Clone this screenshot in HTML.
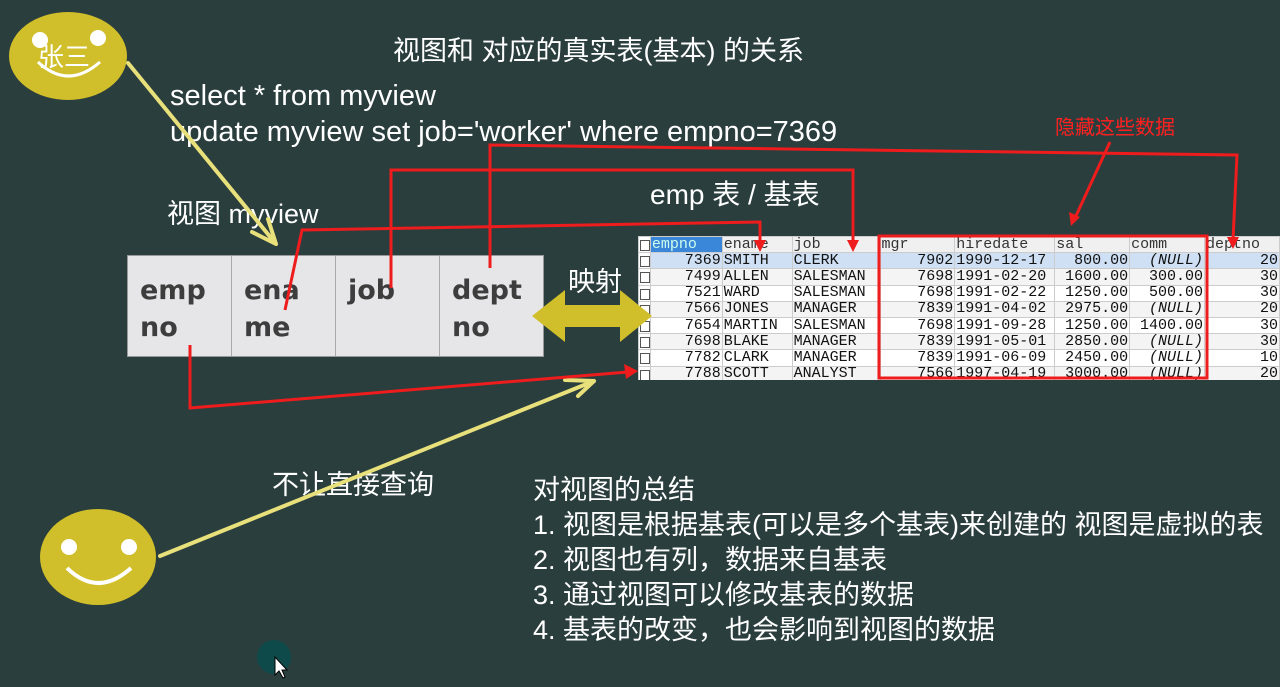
<!DOCTYPE html>
<html><head><meta charset="utf-8"><style>
*{margin:0;padding:0;box-sizing:border-box}
body{width:1280px;height:687px;background:#2b3e3e;position:relative;overflow:hidden;font-family:"Liberation Sans","Noto Sans CJK SC",sans-serif;color:#fff}
.t{position:absolute;white-space:nowrap;line-height:1}
.vb{position:absolute;left:127px;top:255px;width:417px;height:102px;background:#e6e6e8;border:1px solid #999;display:flex}
.vb div{flex:1;border-right:1px solid #aaa;font:bold 27px "DejaVu Sans","Liberation Sans",sans-serif;color:#3d3d3d;padding:16px 0 0 12px;line-height:37px}
.vb div:last-child{border-right:none}
table{position:absolute;left:638px;top:236px;border-collapse:collapse;font:15px "Liberation Mono","DejaVu Sans Mono",monospace;color:#111;background:#fff;table-layout:fixed}
td{height:16.2px;border:1px solid #ccc;padding:0 1px;overflow:hidden;white-space:nowrap;line-height:14px}
tr.h td{background:#f0f0f0;color:#333}
tr.s td{background:#cfe0f5}
tr:nth-child(odd):not(.h):not(.s) td{background:#f4f4f4}
.r{text-align:right}.i{font-style:italic}
td.cb{background:#fff!important;position:relative}
td.cb::after{content:"";position:absolute;left:1px;top:3px;width:8px;height:9px;border:1px solid #555}
</style></head><body>
<div class="t" style="left:393px;top:38px;font-size:27px">视图和 对应的真实表(基本) 的关系</div>
<div class="t" style="left:170px;top:82px;font-size:29px">select * from myview</div>
<div class="t" style="left:170px;top:118px;font-size:29px">update myview set job='worker' where empno=7369</div>
<div class="t" style="left:167px;top:201px;font-size:27px">视图 myview</div>
<div class="t" style="left:650px;top:181px;font-size:28px">emp 表 / 基表</div>
<div class="t" style="left:568px;top:269px;font-size:27px">映射</div>
<div class="t" style="left:272px;top:472px;font-size:27px">不让直接查询</div>
<div class="t" style="left:1055px;top:118px;font-size:20px;color:#ff2020">隐藏这些数据</div>
<div class="t" style="left:533px;top:473px;font-size:27px;line-height:35px">对视图的总结<br>1. 视图是根据基表(可以是多个基表)来创建的 视图是虚拟的表<br>2. 视图也有列，数据来自基表<br>3. 通过视图可以修改基表的数据<br>4. 基表的改变，也会影响到视图的数据</div>
<div class="vb"><div>emp<br>no</div><div>ena<br>me</div><div>job</div><div>dept<br>no</div></div>
<table>
<colgroup><col style="width:12px"><col style="width:72px"><col style="width:70px"><col style="width:88px"><col style="width:75px"><col style="width:100px"><col style="width:75px"><col style="width:75px"><col style="width:75px"></colgroup>
<tr class="h"><td class="cb"></td><td style="background:#3a86d8;color:#cfe">empno</td><td>ename</td><td>job</td><td>mgr</td><td>hiredate</td><td>sal</td><td>comm</td><td>deptno</td></tr>
<tr class="s"><td class="cb"></td><td class="r">7369</td><td>SMITH</td><td>CLERK</td><td class="r">7902</td><td>1990-12-17</td><td class="r">800.00</td><td class="r i">(NULL)</td><td class="r">20</td></tr>
<tr><td class="cb"></td><td class="r">7499</td><td>ALLEN</td><td>SALESMAN</td><td class="r">7698</td><td>1991-02-20</td><td class="r">1600.00</td><td class="r">300.00</td><td class="r">30</td></tr>
<tr><td class="cb"></td><td class="r">7521</td><td>WARD</td><td>SALESMAN</td><td class="r">7698</td><td>1991-02-22</td><td class="r">1250.00</td><td class="r">500.00</td><td class="r">30</td></tr>
<tr><td class="cb"></td><td class="r">7566</td><td>JONES</td><td>MANAGER</td><td class="r">7839</td><td>1991-04-02</td><td class="r">2975.00</td><td class="r i">(NULL)</td><td class="r">20</td></tr>
<tr><td class="cb"></td><td class="r">7654</td><td>MARTIN</td><td>SALESMAN</td><td class="r">7698</td><td>1991-09-28</td><td class="r">1250.00</td><td class="r">1400.00</td><td class="r">30</td></tr>
<tr><td class="cb"></td><td class="r">7698</td><td>BLAKE</td><td>MANAGER</td><td class="r">7839</td><td>1991-05-01</td><td class="r">2850.00</td><td class="r i">(NULL)</td><td class="r">30</td></tr>
<tr><td class="cb"></td><td class="r">7782</td><td>CLARK</td><td>MANAGER</td><td class="r">7839</td><td>1991-06-09</td><td class="r">2450.00</td><td class="r i">(NULL)</td><td class="r">10</td></tr>
<tr><td class="cb"></td><td class="r">7788</td><td>SCOTT</td><td>ANALYST</td><td class="r">7566</td><td>1997-04-19</td><td class="r">3000.00</td><td class="r i">(NULL)</td><td class="r">20</td></tr>
</table>
<div style="position:absolute;left:638px;top:380px;width:642px;height:12px;background:#2b3e3e"></div>
<svg width="1280" height="687" style="position:absolute;left:0;top:0">
<g fill="#d0bf2a"><ellipse cx="68" cy="56" rx="59" ry="44"/><ellipse cx="98" cy="557" rx="58" ry="48"/>
<polygon points="532,316 565,290 565,305 620,305 620,290 652,316 620,342 620,327 565,327 565,342"/></g>
<g fill="#fff"><circle cx="40" cy="40" r="8"/><circle cx="98" cy="38" r="8"/><circle cx="69" cy="547" r="8"/><circle cx="129" cy="547" r="8"/></g>
<path d="M38 62 Q68 90 100 62" stroke="#fff" stroke-width="3" fill="none"/>
<path d="M67 568 Q98 598 131 568" stroke="#fff" stroke-width="4" fill="none"/>
<text x="38" y="66" font-size="26" fill="#fff" font-family="Noto Sans CJK SC,sans-serif">张三</text>
<g stroke="#e8e07a" stroke-width="4" fill="none" stroke-linecap="round">
<path d="M128 63 L276 244 M276 244 L252 232 M276 244 L268 219"/>
<path d="M160 556 L594 381 M594 381 L565 380 M594 381 L578 396"/>
</g>
<g stroke="#ee1c1c" stroke-width="3" fill="none">
<path d="M190 345 L190 408 L628 372"/>
<path d="M285 310 L302 230 L760 222 L760 243"/>
<path d="M391 288 L391 170 L853 170 L853 243"/>
<path d="M490 268 L490 145 L1237 155 L1233 240"/>
<path d="M1110 142 L1075 218"/>
<rect x="879" y="236" width="328" height="142" stroke-width="3"/>
</g>
<g fill="#ee1c1c">
<polygon points="638,371 624,364 626,379"/>
<polygon points="760,252 754,240 766,240"/>
<polygon points="853,252 847,240 859,240"/>
<polygon points="1233,249 1227,237 1239,237"/>
<polygon points="1071,226 1069,212 1080,217"/>
</g>
<circle cx="274" cy="657" r="17" fill="#0e4a4a"/>
<path d="M275 657 L275 675 L279 671 L283 678 L285 677 L282 670 L287 670 Z" fill="#fff" stroke="#000" stroke-width="1"/>
</svg>
</body></html>
